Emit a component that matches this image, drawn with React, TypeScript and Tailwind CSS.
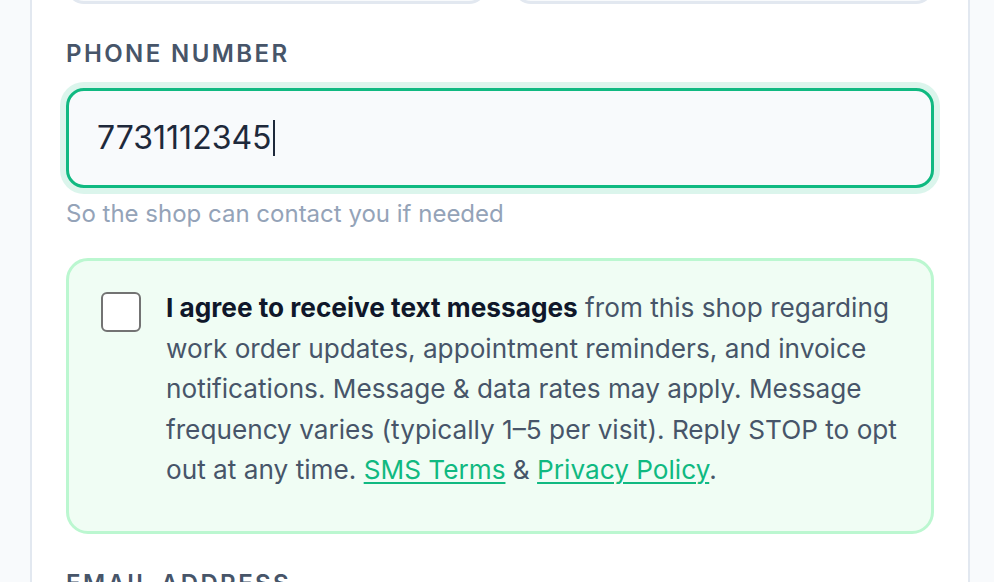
import React from "react"

const font = { fontFamily: "Inter, 'Noto Sans', sans-serif" }

const TextField = ({ className = "" }: { className?: string }) => (
  <div
    className={`h-[100px] rounded-[18px] border-[3px] border-[#e2e8f0] bg-[#f8fafc] ${className}`}
  />
)

const FieldLabel = ({ children, className = "" }: { children: React.ReactNode; className?: string }) => (
  <div
    className={`text-[24px] leading-[32px] font-semibold uppercase tracking-[0.1em] text-[#475569] ${className}`}
  >
    {children}
  </div>
)

export default function App() {
  return (
    <div className="h-[582px] overflow-hidden bg-[#f8fafc]" style={font}>
      <div className="ml-[30px] w-[940px] -mt-[96px] border-x-2 border-[#e2e8f0] bg-white px-[34px] pb-10">
        {/* name row, scrolled mostly out of view */}
        <div className="grid grid-cols-2 gap-[26px]">
          <TextField />
          <TextField />
        </div>

        {/* phone */}
        <FieldLabel className="mt-[34px]">Phone Number</FieldLabel>
        <div className="mt-[18px] flex h-[100px] items-center rounded-[18px] border-[3px] border-[#10b981] bg-[#f8fafc] pl-[28px] ring-[6px] ring-[#10b981]/15">
          <span className="text-[32px] text-[#1e293b]">7731112345</span>
          <span className="ml-px h-[36px] w-[2px] bg-[#1e293b]" />
        </div>
        <p className="mt-[11px] text-[24px] leading-[30px] text-[#94a3b8]">
          So the shop can contact you if needed
        </p>

        {/* sms consent */}
        <div className="mt-[29px] flex gap-[25px] rounded-[22px] border-[3px] border-[#bbf7d0] bg-[#f0fdf4] pb-[40px] pl-[32px] pr-[30px] pt-[27px]">
          <label className="mt-[4px] h-[40px] w-[40px] shrink-0 cursor-pointer rounded-[6px] border-2 border-[#737373] bg-white">
            <input type="checkbox" className="hidden" />
          </label>
          <p className="text-[26.2px] leading-[40.5px] text-[#475569]">
            <span className="font-bold text-[#0f172a]">I agree to receive text messages</span> from this
            shop regarding work order updates, appointment reminders, and invoice notifications. Message
            &amp; data rates may apply. Message frequency varies (typically 1–5 per visit). Reply STOP to
            opt out at any time.{" "}
            <a href="#" className="text-[#10b981] underline underline-offset-[3px] decoration-2">
              SMS Terms
            </a>{" "}
            &amp;{" "}
            <a href="#" className="text-[#10b981] underline underline-offset-[3px] decoration-2">
              Privacy Policy
            </a>
            .
          </p>
        </div>

        {/* email */}
        <FieldLabel className="mt-[34px]">Email Address</FieldLabel>
        <div className="mt-[18px]">
          <TextField />
        </div>
      </div>
    </div>
  )
}
